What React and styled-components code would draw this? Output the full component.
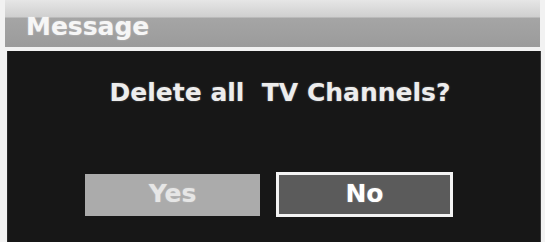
import styled, { createGlobalStyle } from "styled-components";

const GlobalStyle = createGlobalStyle`
    html, body {
        margin: 0;
        padding: 0;
        background: #f2f2f2;
    }
    body {
        font-family: "DejaVu Sans", "Liberation Sans", sans-serif;
    }
`;

const Screen = styled.div`
    width: 545px;
    height: 242px;
    overflow: hidden;
    display: flex;
    flex-direction: column;
    gap: 4px;
    background: #f2f2f2;
`;

const Header = styled.div`
    height: 47px;
    margin: 0 5px;
    box-sizing: border-box;
    padding: 12px 0 0 21px;
    background: linear-gradient(
        to bottom,
        #e6e6e6 0px,
        #cfcfcf 17px,
        #a5a5a5 18px,
        #9b9b9b 47px
    );
    color: #f6f6f6;
    font-size: 25px;
    font-weight: bold;
    line-height: 30px;
    text-shadow: 0 0 2px rgba(255, 255, 255, 0.4);
`;

const Panel = styled.div`
    flex: 1;
    margin: 0 4px 0 7px;
    box-sizing: border-box;
    padding-top: 27px;
    background: #171717;
    border-left: 1px solid #2a2a2a;
    border-right: 1px solid #3a3a3a;
    display: flex;
    flex-direction: column;
    align-items: center;
`;

const Question = styled.div`
    padding-left: 12px;
    color: #ededed;
    font-size: 25px;
    font-weight: bold;
    line-height: 30px;
    white-space: pre;
    text-shadow: 0 0 2px rgba(255, 255, 255, 0.35);
`;

const Buttons = styled.div`
    margin-top: 64px;
    display: flex;
    align-items: center;
    gap: 16px;
    padding-right: 10px;
`;

const Button = styled.div`
    box-sizing: border-box;
    width: ${({ $active }) => ($active ? "177px" : "175px")};
    height: ${({ $active }) => ($active ? "45px" : "42px")};
    display: flex;
    align-items: center;
    justify-content: center;
    background: ${({ $active }) => ($active ? "#5b5b5b" : "#ababab")};
    border: ${({ $active }) => ($active ? "3px solid #f4f4f4" : "none")};
    color: ${({ $active }) => ($active ? "#ffffff" : "#e6e6e6")};
    font-size: 25px;
    font-weight: bold;
    line-height: 30px;
    padding-bottom: 2px;
    text-shadow: 0 0 2px rgba(255, 255, 255, 0.3);
`;

const App = () => {
    const buttons = [
        { id: "yes", label: "Yes", active: false },
        { id: "no", label: "No", active: true },
    ];

    return (
        <>
            <GlobalStyle />
            <Screen>
                <Header>Message</Header>
                <Panel>
                    <Question>{"Delete all  TV Channels?"}</Question>
                    <Buttons>
                        {buttons.map(({ id, label, active }) => (
                            <Button key={id} $active={active}>
                                {label}
                            </Button>
                        ))}
                    </Buttons>
                </Panel>
            </Screen>
        </>
    );
};

export default App;
